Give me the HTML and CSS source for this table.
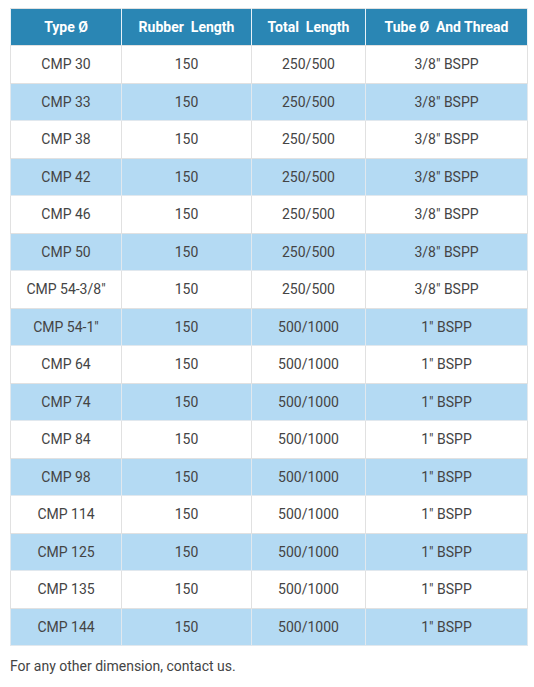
FILE: index.html
```html
<!DOCTYPE html>
<html>
<head>
<meta charset="utf-8">
<link rel="stylesheet" href="styles.css">
</head>
<body>
<div class="page">
<table class="spec">
<colgroup>
<col class="c1"><col class="c2"><col class="c3"><col class="c4">
</colgroup>
<thead>
<tr><th>Type Ø</th><th>Rubber&nbsp; Length</th><th>Total&nbsp; Length</th><th>Tube Ø&nbsp; And Thread</th></tr>
</thead>
<tbody>
<tr><td>CMP 30</td><td>150</td><td>250/500</td><td>3/8" BSPP</td></tr>
<tr><td>CMP 33</td><td>150</td><td>250/500</td><td>3/8" BSPP</td></tr>
<tr><td>CMP 38</td><td>150</td><td>250/500</td><td>3/8" BSPP</td></tr>
<tr><td>CMP 42</td><td>150</td><td>250/500</td><td>3/8" BSPP</td></tr>
<tr><td>CMP 46</td><td>150</td><td>250/500</td><td>3/8" BSPP</td></tr>
<tr><td>CMP 50</td><td>150</td><td>250/500</td><td>3/8" BSPP</td></tr>
<tr><td>CMP 54-3/8"</td><td>150</td><td>250/500</td><td>3/8" BSPP</td></tr>
<tr><td>CMP 54-1"</td><td>150</td><td>500/1000</td><td>1" BSPP</td></tr>
<tr><td>CMP 64</td><td>150</td><td>500/1000</td><td>1" BSPP</td></tr>
<tr><td>CMP 74</td><td>150</td><td>500/1000</td><td>1" BSPP</td></tr>
<tr><td>CMP 84</td><td>150</td><td>500/1000</td><td>1" BSPP</td></tr>
<tr><td>CMP 98</td><td>150</td><td>500/1000</td><td>1" BSPP</td></tr>
<tr><td>CMP 114</td><td>150</td><td>500/1000</td><td>1" BSPP</td></tr>
<tr><td>CMP 125</td><td>150</td><td>500/1000</td><td>1" BSPP</td></tr>
<tr><td>CMP 135</td><td>150</td><td>500/1000</td><td>1" BSPP</td></tr>
<tr><td>CMP 144</td><td>150</td><td>500/1000</td><td>1" BSPP</td></tr>
</tbody>
</table>
<p class="note">For any other dimension, contact us.</p>
</div>
</body>
</html>
```

FILE: styles.css
```css
html, body {
  margin: 0;
  padding: 0;
  background: #ffffff;
}
.page {
  padding: 8px 6px 0 10px;
  font-family: Roboto, "Liberation Sans", sans-serif;
  font-size: 14px;
  color: #444444;
}
.spec {
  width: 517px;
  border-collapse: collapse;
  table-layout: fixed;
}
.c1 { width: 111px; }
.c2 { width: 130px; }
.c3 { width: 114px; }
.c4 { width: 162px; }
.spec th {
  background: #2a86b4;
  color: #ffffff;
  font-weight: 700;
  height: 36px;
  padding: 0 4px;
  border: 1px solid #e1e1e1;
  border-left-color: #e8f1f7;
  border-right-color: #e8f1f7;
  text-align: center;
}
.spec td {
  height: 36.5px;
  padding: 0 4px;
  border: 1px solid #e1e1e1;
  text-align: center;
}
.spec tbody tr:nth-child(even) td {
  background: #b4daf3;
  border-color: #e1e8ee;
}
.note {
  margin: 10px 0 0 0;
  line-height: 20px;
}
```
